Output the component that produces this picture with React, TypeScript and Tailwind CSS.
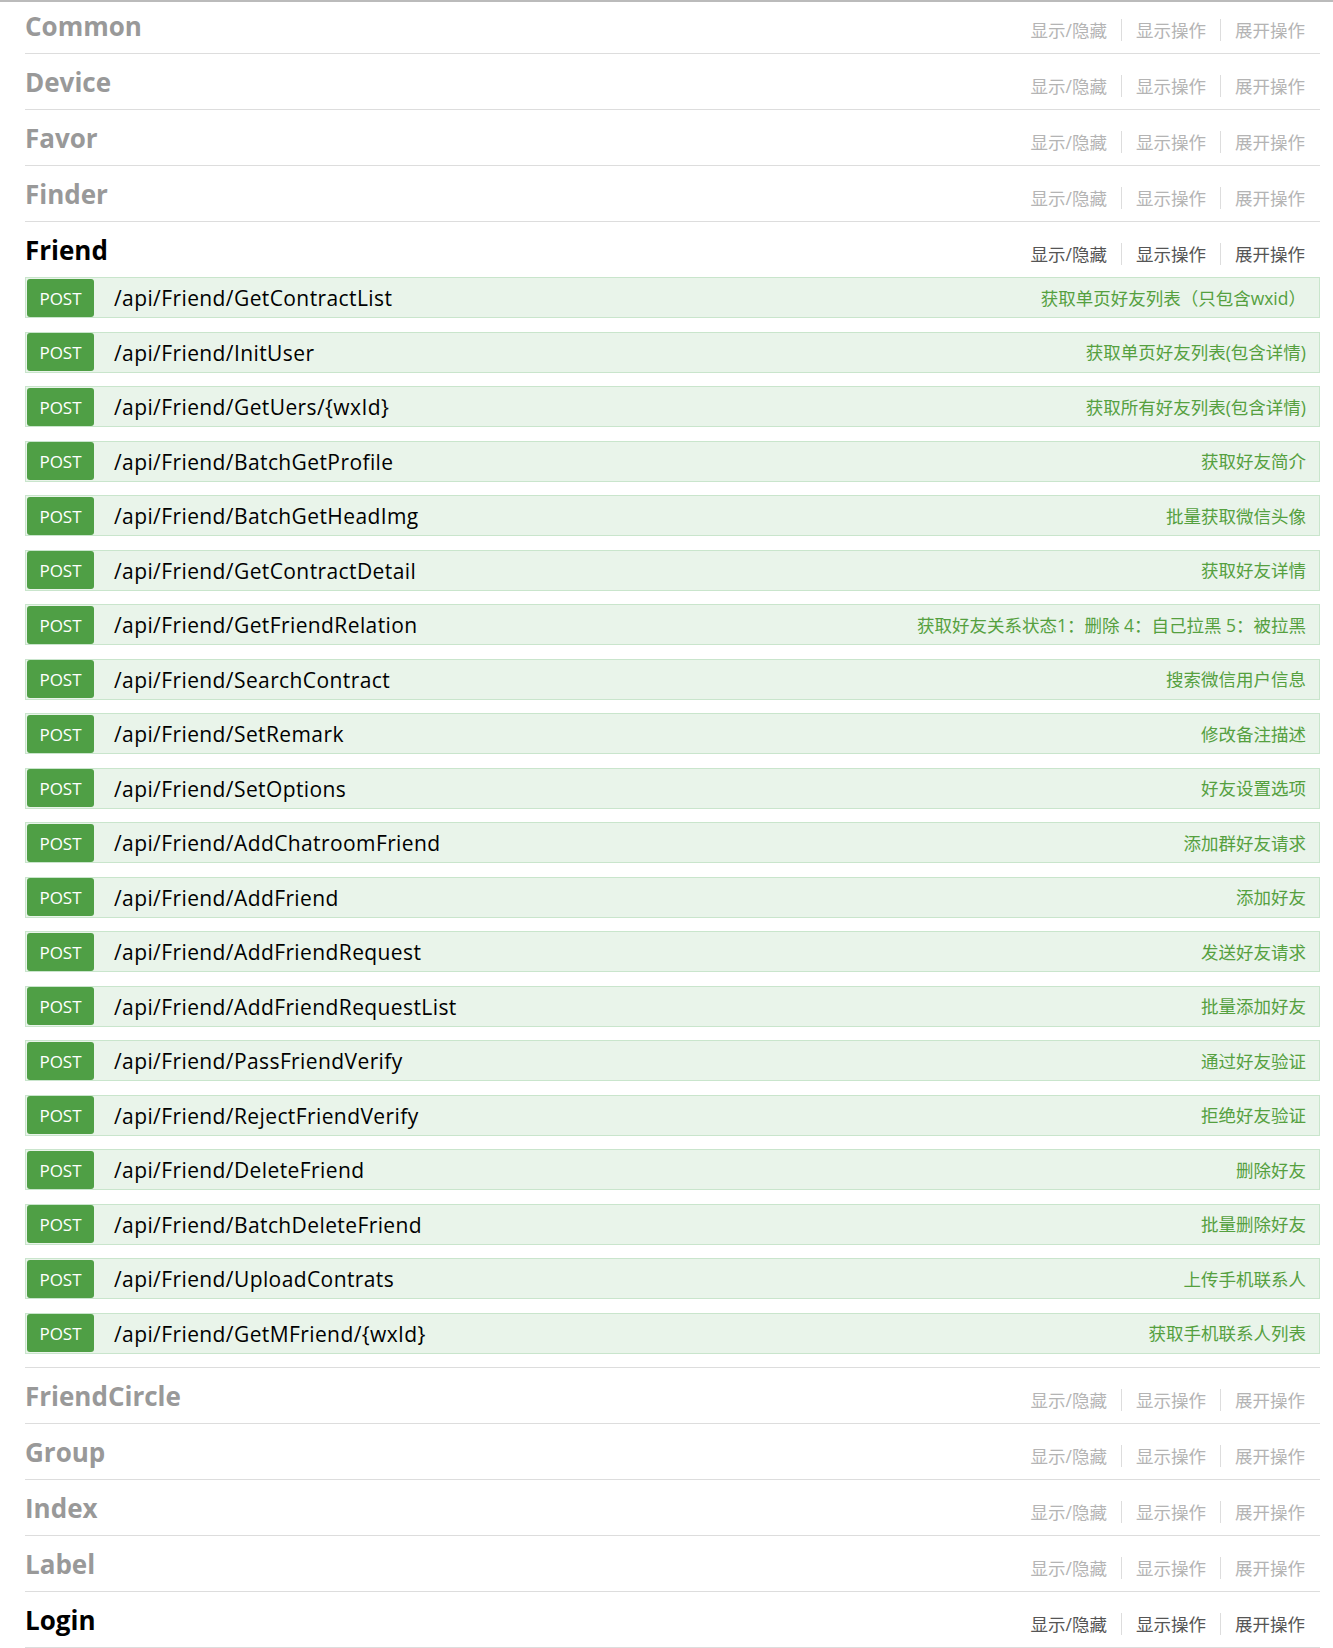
import React from 'react';

type Op = { path: string; summary: string };

const ops: Op[] = [
  { path: '/api/Friend/GetContractList', summary: '获取单页好友列表（只包含wxid）' },
  { path: '/api/Friend/InitUser', summary: '获取单页好友列表(包含详情)' },
  { path: '/api/Friend/GetUers/{wxId}', summary: '获取所有好友列表(包含详情)' },
  { path: '/api/Friend/BatchGetProfile', summary: '获取好友简介' },
  { path: '/api/Friend/BatchGetHeadImg', summary: '批量获取微信头像' },
  { path: '/api/Friend/GetContractDetail', summary: '获取好友详情' },
  { path: '/api/Friend/GetFriendRelation', summary: '获取好友关系状态1：删除 4：自己拉黑 5：被拉黑' },
  { path: '/api/Friend/SearchContract', summary: '搜索微信用户信息' },
  { path: '/api/Friend/SetRemark', summary: '修改备注描述' },
  { path: '/api/Friend/SetOptions', summary: '好友设置选项' },
  { path: '/api/Friend/AddChatroomFriend', summary: '添加群好友请求' },
  { path: '/api/Friend/AddFriend', summary: '添加好友' },
  { path: '/api/Friend/AddFriendRequest', summary: '发送好友请求' },
  { path: '/api/Friend/AddFriendRequestList', summary: '批量添加好友' },
  { path: '/api/Friend/PassFriendVerify', summary: '通过好友验证' },
  { path: '/api/Friend/RejectFriendVerify', summary: '拒绝好友验证' },
  { path: '/api/Friend/DeleteFriend', summary: '删除好友' },
  { path: '/api/Friend/BatchDeleteFriend', summary: '批量删除好友' },
  { path: '/api/Friend/UploadContrats', summary: '上传手机联系人' },
  { path: '/api/Friend/GetMFriend/{wxId}', summary: '获取手机联系人列表' },
];

const font = "font-['Open_Sans','Noto_Sans_CJK_SC',sans-serif]";

const Heading: React.FC<{ name: string; active?: boolean; first?: boolean }> = ({ name, active, first }) => (
  <div className={`flex items-center justify-between ${first ? 'h-[51px] pb-[4px]' : 'h-[55px]'}`}>
    <h2 className={`text-[26px] font-bold leading-none ${active ? 'text-black' : 'text-[#999]'}`}>{name}</h2>
    <ul className={`flex items-center pt-[9px] text-[17.5px] leading-[22px] ${active ? 'text-[#555]' : 'text-[#b4b4b4]'}`}>
      <li className="px-[14px]">显示/隐藏</li>
      <li className="px-[14px] border-l border-[#ddd]">显示操作</li>
      <li className="pl-[14px] pr-[15px] border-l border-[#ddd]">展开操作</li>
    </ul>
  </div>
);

const Section: React.FC<{ name: string; active?: boolean; first?: boolean; children?: React.ReactNode }> = ({ name, active, first, children }) => (
  <li className="border-b border-[#ddd]">
    <Heading name={name} active={active} first={first} />
    {children}
  </li>
);

const OpRow: React.FC<{ op: Op }> = ({ op }) => (
  <div className="mb-[13.5px] flex h-[41px] items-center border border-[#c9e5cc] bg-[#e9f4ea]">
    <span className="ml-px flex h-[38px] w-[67px] items-center justify-center rounded-[3px] bg-[#4f9f45] pt-[2px] text-[17px] text-white">
      POST
    </span>
    <span className="ml-[20px] flex-1 pt-[3px] text-[21px] tracking-[0.4px] text-black">{op.path}</span>
    <span className="pr-[13px] pt-px text-[17.5px] text-[#55a03f]">{op.summary}</span>
  </div>
);

export default function App() {
  return (
    <div className={`min-h-screen bg-white ${font}`}>
      <div className="border-t-2 border-[#bbb]" />
      <ul className="pl-[25px] pr-[13px]">
        <Section name="Common" first />
        <Section name="Device" />
        <Section name="Favor" />
        <Section name="Finder" />
        <Section name="Friend" active>
          <div>
            {ops.map((op) => (
              <OpRow key={op.path} op={op} />
            ))}
          </div>
        </Section>
        <Section name="FriendCircle" />
        <Section name="Group" />
        <Section name="Index" />
        <Section name="Label" />
        <Section name="Login" active />
      </ul>
    </div>
  );
}
